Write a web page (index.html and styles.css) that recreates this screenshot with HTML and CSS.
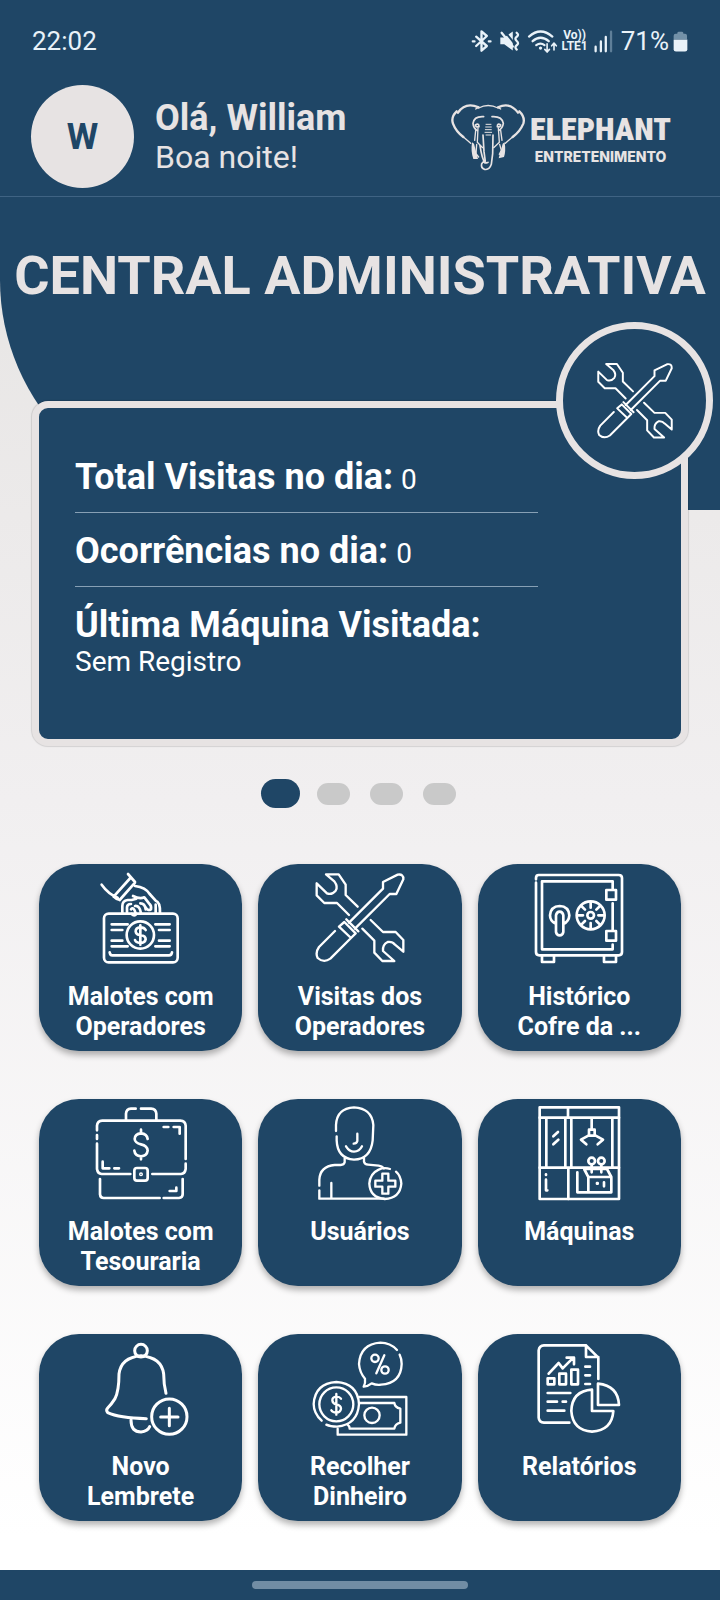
FILE: index.html
```html
<!DOCTYPE html>
<html lang="pt-BR">
<head>
<meta charset="utf-8">
<meta name="viewport" content="width=device-width, initial-scale=1">
<title>Central Administrativa</title>
<link rel="stylesheet" href="styles.css">
</head>
<body>
<svg class="defs" aria-hidden="true">
  <symbol id="tools" viewBox="193 338 276 276">
    <path d="M324 442 288 407V376L267 345H229L254 366Q266 382 258 394 246 408 232 402L201 372V408L224 431H262L298 467"/>
    <path d="M338 508 374 544V580L398 605H434L400 575Q398 556 414 548 428 546 436 556L461 577V542L438 518H400L363 482"/>
    <path d="M298 490 400 388V368L444 346Q462 343 461 360L440 404H420L316 508"/>
    <path d="M284 488 318 522 304 536 268 502ZM256 515 208 563Q196 580 204 596 222 612 242 598L304 536M290 480 326 516"/>
  </symbol>
</svg>

<div class="status">
  <span class="clock">22:02</span>
  <div class="indicators">
    <svg class="bt" viewBox="96 58 56 66"><path d="M108 78 140 106 124 120V62L140 76 108 106"/><path d="M98 92h5M146 92h5"/></svg>
    <svg class="mute" viewBox="180 58 64 66"><path class="solid" d="M184 80h12l26-18v58l-26-19h-12z"/><path class="cut" d="M196 60 228 100"/><path d="M188 66 222 108M234 66q8 6 0 12t0 13 0 13 0 13"/></svg>
    <svg class="wifi" viewBox="268 55 88 70"><path d="M271 75Q306 44 342 75M282 89Q306 68 331 89M293 101Q306 92 318 101"/><circle class="solid" cx="306" cy="110" r="5"/><path class="thin" d="M326 97v24M319 114l7 8 7-8M347 116V96M340 103l7-8 7 8"/></svg>
    <span class="volte"><span>Vo))</span><span>LTE1</span></span>
    <svg class="signal" viewBox="460 60 58 64"><path d="M465 108v14M481 92v30M496 78v44"/><path class="dim" d="M512 62v60"/></svg>
    <span class="percent">71%</span>
    <svg class="battery" viewBox="700 60 46 64"><path class="dimfill" d="M702 84V74q0-6 6-6h5q0-6 4-6h11q4 0 4 6h5q6 0 6 6v10z"/><path class="solid" d="M702 86h42v30q0 7-7 7h-28q-7 0-7-7z"/></svg>
  </div>
</div>

<header class="header">
  <div class="avatar">W</div>
  <div class="greeting">
    <strong>Olá, William</strong>
    <span>Boa noite!</span>
  </div>
  <div class="brand">
    <svg viewBox="42 278 228 204" role="img" aria-label="Elefante">
      <path class="heavy" d="M66 307Q88 274 128 291M246 307Q222 274 186 291"/>
      <path d="M128 293Q156 278 186 293M119 296 128 291M194 296 186 291"/>
      <path class="heavy" d="M62 303Q44 320 51 340 60 364 82 380M250 303Q268 320 262 340 252 364 230 380"/>
      <path d="M78 376 104 399M234 376 208 399"/>
      <path class="mid" d="M143 319Q114 317 111 339 112 353 124 361M168 319Q198 317 202 339 200 353 188 361"/>
      <path class="mid" d="M118 344Q129 337 129 349 119 352 118 344M194 344Q184 337 184 349 193 352 194 344"/>
      <path d="M126 353 124 396 140 412M187 353 190 396 173 412M119 360 116 390M194 360 198 390"/>
      <path class="solid" d="M108 396Q104 424 112 446L126 446 114 400zM206 396Q210 424 204 440L188 444 200 400z"/>
      <path d="M122 402 120 430 128 440M191 402 196 420 190 432"/>
      <path class="mid" d="M141 374 144 424 148 454Q150 460 156 456M171 374 170 430 166 462Q160 480 146 477 134 474 137 460L142 454M132 406Q138 446 147 458"/>
      <path class="fine" d="M150 342h15M149 350h17M148 358h18M147 366h20M150 374h14"/>
    </svg>
    <div class="wordmark"><b>ELEPHANT</b><small>ENTRETENIMENTO</small></div>
  </div>
</header>

<section class="hero">
  <h1>CENTRAL ADMINISTRATIVA</h1>
</section>

<main class="content">
  <section class="card">
    <div class="badge"><svg><use href="#tools"/></svg></div>
    <dl>
      <div class="row"><dt>Total Visitas no dia:</dt> <dd>0</dd></div>
      <div class="row"><dt>Ocorrências no dia:</dt> <dd>0</dd></div>
      <div class="row last"><dt>Última Máquina Visitada:</dt> <dd>Sem Registro</dd></div>
    </dl>
  </section>

  <div class="dots">
    <button class="active" aria-label="Página 1"></button>
    <button aria-label="Página 2"></button>
    <button aria-label="Página 3"></button>
    <button aria-label="Página 4"></button>
  </div>

  <nav class="grid">
    <button class="tile">
      <svg viewBox="194 66 276 276">
        <path d="M214 104Q234 132 262 143M293 72 314 96M250 140 300 84M268 150 314 98M250 140Q262 152 270 148M314 108Q346 112 358 132L376 152M276 190V168Q276 152 292 150H304L318 146M376 152Q390 156 389 188M290 188V172Q290 162 302 162"/>
        <path d="M308 138Q328 148 342 142L356 160Q364 166 362 178 352 184 346 172M302 178Q310 168 316 190M314 168Q328 166 332 190M330 160Q344 160 346 178M304 192Q312 200 318 192M376 164V188"/>
        <rect x="221" y="191" width="221" height="146" rx="14"/>
        <circle cx="330" cy="255" r="41"/>
        <path d="M244 223h48M244 240h32M244 272h32M244 289h48M375 223h43M386 240h32M386 272h32M375 289h43M238 307q1 9 8 9H416q8 0 9-9"/>
        <path d="M346 240Q342 232 330 232 316 233 316 244 317 254 330 255 346 257 346 268 344 279 330 279 316 278 314 270M330 226v58"/>
      </svg>
      <span>Malotes com Operadores</span>
    </button>
    <button class="tile">
      <svg class="light"><use href="#tools"/></svg>
      <span>Visitas dos Operadores</span>
    </button>
    <button class="tile">
      <svg viewBox="189 66 276 276">
        <path d="M198 88V84Q198 75 206 75H446Q456 75 456 84V306Q456 316 446 316H208Q198 316 198 306V98"/>
        <path d="M428 116V94H216V298H428V284M428 160V242"/>
        <rect x="409" y="120" width="29" height="29"/><rect x="409" y="243" width="29" height="29"/>
        <path d="M216 318v18h36v-18M402 318v18h36v-18"/>
        <circle cx="362" cy="196" r="42"/><circle cx="362" cy="196" r="10"/>
        <path d="M362 156v17M362 219v17M322 196h17M385 196h17M334 168l11 11M379 213l11 11M390 168l-11 11M345 213l-11 11"/>
        <path d="M258 222Q240 214 240 196 242 169 269 168 296 169 298 196 297 214 280 222M258 246V196Q260 185 269 185 278 185 280 196V246Q278 256 269 256 260 256 258 246Z"/>
      </svg>
      <span>Histórico Cofre da ...</span>
    </button>
    <button class="tile">
      <svg viewBox="194 50 276 276">
        <path d="M287 88V70Q288 56 302 55H316M332 55H362Q377 56 378 70V88M200 120V106Q201 92 216 91H450Q465 92 466 106V206M200 134V146M200 160V236Q202 250 214 251H300M466 220V236Q464 250 452 251H366"/>
        <path d="M400 110h14M430 110h18v20M217 214v20h20M252 234h14M209 266V312Q210 323 220 323H388M400 323H446Q457 322 457 312V266M438 292v10h-20"/>
        <rect x="312" y="233" width="40" height="38" rx="8"/><circle cx="332" cy="252" r="2"/>
        <path d="M352 146Q350 130 332 129 314 130 313 146 314 158 332 162 351 166 352 181 350 197 332 198 314 197 312 181M332 118v10M332 199v8"/>
      </svg>
      <span>Malotes com Tesouraria</span>
    </button>
    <button class="tile">
      <svg class="light" viewBox="12 50 276 276">
        <path d="M78 122V104Q80 54 132 51 186 54 190 104L188 150Q182 206 132 208 82 204 80 150V138"/>
        <path d="M142 130V152Q140 160 131 160M108 168Q118 184 132 184 148 184 156 168"/>
        <path d="M104 204V216Q102 224 92 224H74Q30 228 28 268V286M28 300V325H222M64 278V324M162 204V214Q164 222 174 223L206 226Q216 228 222 234"/>
        <path d="M240 236Q222 230 206 238 180 250 178 280 180 322 224 326 270 324 274 280 272 256 258 244"/>
        <path d="M217 250h18v21h21v18h-21v21h-18v-21h-21v-18h21z"/>
      </svg>
      <span>Usuários</span>
    </button>
    <button class="tile">
      <svg viewBox="668 50 276 276">
        <rect x="688" y="51" width="238" height="275"/>
        <path d="M688 82H926M773 51V82M708 84V230M765 84V230M783 84V230M906 84V230M688 232H926M774 232V326"/>
        <path d="M729 138 743 125M729 162 744 148M844 86V116M828 162 812 148 834 136M862 162 878 148 856 136"/>
        <rect x="836" y="118" width="17" height="18"/>
        <circle cx="844" cy="212" r="10"/><circle cx="873" cy="212" r="10"/>
        <path d="M844 224V246M873 224V246M822 236H890L903 260H834ZM834 260V306H903V260M822 238 834 260M801 246V306H834M860 278h2v2h-2zM881 276v12M707 252v2M707 268V300M707 300h4"/>
      </svg>
      <span>Máquinas</span>
    </button>
    <button class="tile">
      <svg class="bold" viewBox="104 34 276 276">
        <circle cx="242" cy="60" r="19"/>
        <path d="M317 188Q310 160 310 130 304 80 242 75 182 80 176 130 176 180 164 204 154 220 142 232 136 238 142 246 176 262 258 264M212 268Q212 304 242 304 262 302 268 288"/>
        <circle cx="327" cy="258" r="53"/>
        <path d="M327 233v52M301 259h52"/>
      </svg>
      <span>Novo Lembrete</span>
    </button>
    <button class="tile">
      <svg class="light" viewBox="763 34 276 276">
        <path d="M1012 58Q992 36 962 36 902 40 898 100 900 126 916 144 918 158 912 168 926 166 936 158 950 164 964 162 1024 158 1026 100 1026 84 1020 72"/>
        <circle cx="946" cy="83" r="11"/><circle cx="976" cy="118" r="11"/><path d="M974 74 950 128"/>
        <circle cx="830" cy="221" r="51"/>
        <path d="M786 270Q762 248 762 220 766 158 830 154 894 158 898 220 894 282 832 288 812 288 800 282"/>
        <path d="M844 204Q840 198 830 198 818 199 818 209 819 219 830 221 844 224 844 234 842 245 830 246 818 245 815 239M830 190v62"/>
        <path d="M898 199H1040V312H834V294M898 217H1004Q1006 230 1022 234V276Q1006 280 1004 294H870Q870 286 864 282"/>
        <circle cx="937" cy="254" r="23"/>
      </svg>
      <span>Recolher Dinheiro</span>
    </button>
    <button class="tile">
      <svg viewBox="189 63 276 276">
        <path d="M298 305H222Q207 304 206 290V88Q208 74 222 73H348L385 110V174M348 73V108H385"/>
        <path d="M236 158 266 126 278 142 310 110M290 110H312V130M233 172h20v18h-20zM268 158h20v32h-20zM304 146h20v44h-20zM346 137h14M346 163h14M346 189h14M233 216h68M233 242h28M278 242h10M233 269h50"/>
        <path d="M366 206Q306 210 304 270 308 328 366 332 426 328 430 270H366ZM384 188V252H447Q444 194 384 188Z"/>
      </svg>
      <span>Relatórios</span>
    </button>
  </nav>
</main>

<footer class="navbar"><div class="handle"></div></footer>
</body>
</html>
```
FILE: styles.css
```css
:root {
  --navy: #1f4666;
  --light: #e7e3e3;
}

* { box-sizing: border-box; }

body {
  margin: 0;
  min-height: 100vh;
  display: flex;
  flex-direction: column;
  font-family: Roboto, "Liberation Sans", sans-serif;
  background: linear-gradient(#e3e1df, #f1eff0 50%, #ffffff 96%);
}

svg {
  display: block;
  overflow: visible;
  fill: none;
  stroke: #fff;
  stroke-width: 7;
  stroke-linecap: round;
  stroke-linejoin: round;
}

.defs { position: absolute; width: 0; height: 0; }

button { border: 0; padding: 0; font: inherit; cursor: pointer; }

.status {
  display: flex;
  align-items: center;
  justify-content: space-between;
  height: 80px;
  padding: 2px 32px 0;
  background: var(--navy);
  color: #e9f2f9;
  font-size: 26px;
}

.indicators { display: flex; align-items: center; gap: 8px; }
.indicators svg { stroke: #e9f2f9; }
.indicators .solid { fill: #e9f2f9; stroke: none; }
.indicators .cut { stroke: var(--navy); stroke-width: 6; }
.indicators .thin { stroke-width: 5; }
.indicators .dim { stroke: #5f7f99; }
.indicators .dimfill { fill: #7391a8; stroke: none; }
.bt { width: 19px; height: 22px; }
.mute { width: 21px; height: 22px; }
.wifi { width: 29px; height: 23px; }
.signal { width: 19px; height: 21px; }
.battery { width: 15px; height: 21px; margin-left: -4px; }

.volte {
  display: flex;
  flex-direction: column;
  align-items: center;
  margin: 0 -2px 0 -4px;
  font-size: 12px;
  font-weight: 700;
  line-height: 11px;
}

.header {
  display: flex;
  align-items: center;
  padding: 5px 49px 8px 31px;
  background: var(--navy);
  border-bottom: 1px solid #3f6383;
  color: var(--light);
}

.avatar {
  display: flex;
  align-items: center;
  justify-content: center;
  width: 103px;
  height: 103px;
  border-radius: 50%;
  background: var(--light);
  color: var(--navy);
  font-size: 36px;
  font-weight: 700;
}

.greeting {
  display: flex;
  flex-direction: column;
  margin-left: 21px;
  font-size: 32px;
  line-height: 38px;
}

.greeting strong { font-size: 36px; line-height: 40px; }

.brand { display: flex; align-items: center; gap: 4px; margin-left: auto; }

.brand svg {
  width: 76px;
  height: 68px;
  stroke: var(--light);
  stroke-width: 4;
}

.brand .heavy { stroke-width: 7; }
.brand .mid { stroke-width: 5; }
.brand .fine { stroke-width: 3; }
.brand .solid { fill: var(--light); stroke: none; }

.wordmark { display: flex; flex-direction: column; align-items: center; }

.wordmark b {
  font-family: "Roboto Condensed", "Liberation Sans Narrow", Roboto, sans-serif;
  font-size: 32px;
  font-weight: 900;
  line-height: 40px;
}

.wordmark small { font-family: Inter, sans-serif; font-size: 14px; font-weight: 800; line-height: 16px; }

.hero {
  padding: 47px 0 202px;
  background: var(--navy);
  border-bottom-left-radius: 240px 230px;
}

h1 {
  margin: 0;
  color: var(--light);
  font-size: 54px;
  font-weight: 700;
  line-height: 64px;
  text-align: center;
  white-space: nowrap;
}

.content { flex: 1; padding: 0 32px 49px; margin-top: -109px; }

.card {
  position: relative;
  min-height: 345px;
  padding: 42px 36px;
  border: 7px solid var(--light);
  border-radius: 16px;
  background: var(--navy);
  box-shadow: 0 0 1px 1px rgba(0, 0, 0, 0.12);
  color: #fff;
}

.badge {
  position: absolute;
  top: -86px;
  right: -32px;
  display: flex;
  align-items: center;
  justify-content: center;
  width: 157px;
  height: 157px;
  border: 7px solid var(--light);
  border-radius: 50%;
  background: var(--navy);
}

.badge svg { width: 78px; height: 78px; }

dl { margin: 0; width: 463px; max-width: 100%; }
dt, dd { display: inline; margin: 0; }
dt { font-size: 36px; font-weight: 700; }
dd { margin-left: 4px; font-size: 28px; }

.row {
  height: 74px;
  padding-top: 16px;
  border-bottom: 1px solid #87a0b5;
  line-height: 44px;
}

.row:first-child { height: 63px; padding-top: 5px; }
.row.last { height: auto; border: 0; }
.row.last dt, .row.last dd { display: block; }
.row.last dd { margin-left: 0; line-height: 30px; }

.dots { display: flex; justify-content: center; margin: 33px 0 55px; }

.dots button {
  width: 33px;
  height: 22px;
  margin: 4px 10px;
  border-radius: 12px;
  background: #c9c9c9;
}

.dots .active {
  width: 39px;
  height: 29px;
  margin: 0 7px;
  border-radius: 15px;
  background: var(--navy);
}

.grid {
  display: grid;
  grid-template-columns: repeat(3, 1fr);
  gap: 48px 16px;
  padding: 0 7px;
}

.tile {
  display: flex;
  flex-direction: column;
  align-items: center;
  gap: 18px;
  min-height: 187px;
  padding: 8px 20px;
  border-radius: 40px;
  background: var(--navy);
  box-shadow: 0 4px 6px rgba(0, 0, 0, 0.3);
  color: #fff;
  font-size: 25px;
  font-weight: 700;
  line-height: 30px;
}

.tile svg { width: 92px; height: 92px; stroke-width: 8; }
.tile .light { stroke-width: 7; }
.tile .bold { stroke-width: 9; }

.navbar {
  display: flex;
  align-items: center;
  justify-content: center;
  height: 30px;
  background: var(--navy);
}

.handle { width: 30%; height: 8px; border-radius: 4px; background: #718da4; }
```
